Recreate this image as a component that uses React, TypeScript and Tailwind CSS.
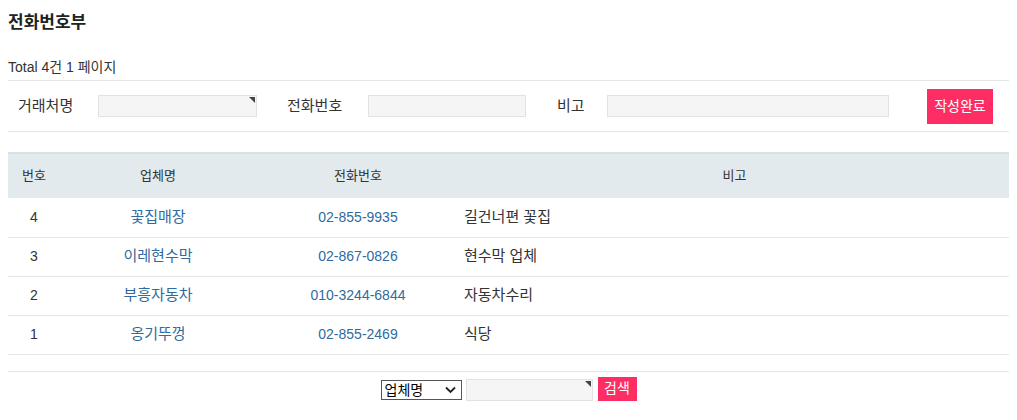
import React from "react";

const rows = [
  { no: 4, name: "꽃집매장", tel: "02-855-9935", note: "길건너편 꽃집" },
  { no: 3, name: "이레현수막", tel: "02-867-0826", note: "현수막 업체" },
  { no: 2, name: "부흥자동차", tel: "010-3244-6844", note: "자동차수리" },
  { no: 1, name: "옹기뚜껑", tel: "02-855-2469", note: "식당" },
];

function Field({ w, corner }: { w: string; corner?: boolean }) {
  return (
    <div className={`relative h-[22px] ${w} border border-[#e2e2e2] bg-[#f5f5f5]`}>
      {corner && (
        <span className="absolute right-[1px] top-[1px] h-0 w-0 border-l-[6px] border-t-[6px] border-l-transparent border-t-[#444]" />
      )}
    </div>
  );
}

export default function App() {
  return (
    <div
      className="bg-white px-2 text-[#333] min-h-[420px]"
      style={{ fontFamily: '"Liberation Sans", "Noto Sans CJK KR", sans-serif' }}
    >
      <h1 className="pt-[11px] text-[17px] font-bold leading-[24px] text-[#222]">전화번호부</h1>
      <div className="mt-[24px] text-[14px] leading-[16px]">Total 4건 1 페이지</div>

      <div className="mt-[5px] flex h-[52px] items-center border-y border-[#e6e6e6] pl-[10px] text-[15px]">
        <span className="w-[80px]">거래처명</span>
        <Field w="w-[159px]" corner />
        <span className="ml-[30px] w-[81px]">전화번호</span>
        <Field w="w-[158px]" />
        <span className="ml-[31px] w-[50px]">비고</span>
        <Field w="w-[282px]" />
        <button className="ml-[38px] h-[35px] w-[66px] bg-[#fe2e64] text-[14px] text-white">
          작성완료
        </button>
      </div>

      <table className="mt-[20px] w-full border-collapse text-[13px]">
        <thead>
          <tr className="h-[45px] border-t-2 border-[#d8e0e4] bg-[#e3eaed] text-center">
            <th className="w-[52px] font-normal">번호</th>
            <th className="w-[196px] font-normal">업체명</th>
            <th className="w-[204px] font-normal">전화번호</th>
            <th className="font-normal">비고</th>
          </tr>
        </thead>
        <tbody className="text-[14px]">
          {rows.map((r) => (
            <tr key={r.no} className="h-[39px] border-b border-[#e6e6e6]">
              <td className="text-center">{r.no}</td>
              <td className="text-center text-[15px] text-[#2f6b9e]">{r.name}</td>
              <td className="text-center text-[#2f6b9e]">{r.tel}</td>
              <td className="pl-[4px] text-[15px]">{r.note}</td>
            </tr>
          ))}
        </tbody>
      </table>

      <div className="mt-[16px] flex justify-center border-t border-[#e6e6e6] pt-[5px]">
        <div className="flex items-center">
          <div className="relative mt-[2px] flex h-[20px] w-[81px] items-center border border-[#555] bg-white pl-[3px] text-[14px] leading-none text-black">
            <span>업체명</span>
            <svg
              className="pointer-events-none absolute right-[5px] top-[5px]"
              width="11"
              height="8"
              viewBox="0 0 11 8"
            >
              <path d="M1 1.5 L5.5 6 L10 1.5" stroke="#222" strokeWidth="1.8" fill="none" />
            </svg>
            <select className="absolute inset-0 opacity-0" aria-label="검색 항목">
              <option>업체명</option>
            </select>
          </div>
          <div className="ml-[4px] mt-[2px]">
            <Field w="w-[127px]" corner />
          </div>
          <button className="ml-[5px] h-[24px] w-[39px] bg-[#fe2e64] text-[14px] text-white">검색</button>
        </div>
      </div>
    </div>
  );
}
